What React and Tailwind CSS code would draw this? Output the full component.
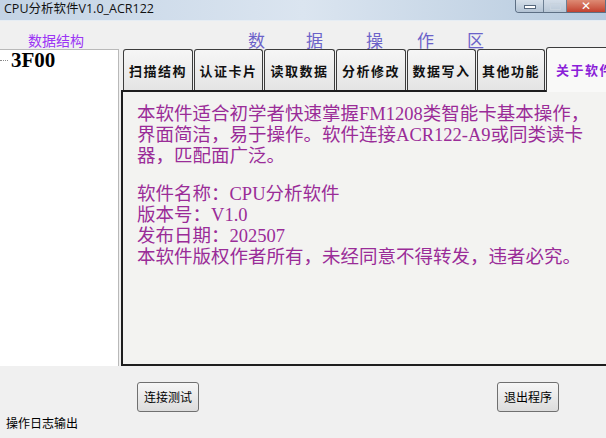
export default function App() {
  const tabs = [
    ["扫描结构", "w-[70px]"],
    ["认证卡片", "w-[69px]"],
    ["读取数据", "w-[71px]"],
    ["分析修改", "w-[70px]"],
    ["数据写入", "w-[69px]"],
    ["其他功能", "w-[68px]"],
  ];
  const lat = "font-['Liberation_Serif',serif]";
  return (
    <div className="w-[606px] h-[438px] overflow-hidden bg-[#f0f0f0] flex flex-col font-['Noto_Sans_CJK_SC',sans-serif]">
      {/* title bar */}
      <div className="h-[21px] shrink-0 flex items-start justify-between bg-linear-to-r from-[#c3d3e5] via-[#dbe5f0] to-[#b6cade] border-b border-[#e6edf4]">
        <span className="pl-[4px] pt-[1px] text-[12.5px] leading-[16px] text-[#111] font-['Open_Sans','Noto_Sans_CJK_SC',sans-serif]">
          CPU分析软件V1.0_ACR122
        </span>
        <div className="flex h-[13px] border border-t-0 border-[#5d6f84] rounded-bl-[4px] overflow-hidden">
          <div className="w-[28px] h-full flex items-center justify-center bg-linear-to-b from-[#d6e0ea] to-[#b3c3d4] border-r border-[#6d7f93]">
            <div className="w-[12px] h-[4px] bg-white border border-[#55677c] mt-[1px]" />
          </div>
          <div className="w-[23px] h-full flex items-center justify-center bg-linear-to-b from-[#d3dde8] to-[#b8c7d6] border-r border-[#6d7f93]">
            <div className="w-[11px] h-[7px] border border-[#c9d4df]" />
          </div>
          <div className="w-[38px] h-full flex items-center justify-center bg-linear-to-b from-[#dd8a74] to-[#c2402f] text-white text-[12px] leading-[12px] font-bold font-['DejaVu_Sans',sans-serif]">
            ✕
          </div>
        </div>
      </div>

      {/* header labels */}
      <div className="h-[26px] shrink-0 flex items-center">
        <span className="ml-[28px] text-[14px] leading-[16px] text-[#9b34f5] mt-[11px]">数据结构</span>
        <div className="ml-[164px] flex text-[17px] leading-[18px] text-[#6b62c9] mt-[11px]">
          <span>数</span>
          <span className="ml-[41px]">据</span>
          <span className="ml-[43px]">操</span>
          <span className="ml-[34px]">作</span>
          <span className="ml-[33px]">区</span>
        </div>
      </div>

      {/* main row */}
      <div className="h-[319px] shrink-0 flex">
        <div className="w-[119px] shrink-0 mt-[2px] bg-white border-t border-r border-[#b9b9b9]">
          <div className="flex items-center">
            <div className="w-[8px] border-t border-dotted border-[#8a8a8a]" />
            <span className={`ml-[3px] text-[21px] leading-[20px] font-bold text-black ${lat}`}>3F00</span>
          </div>
        </div>

        <div className="ml-[2px] w-[492px] shrink-0 flex flex-col">
          <div className="h-[43px] shrink-0 flex items-end pl-[2px] gap-[1px]">
            {tabs.map(([t, w]) => (
              <div
                key={t}
                className={`${w} shrink-0 h-[41px] flex items-center justify-center pt-[2px] border border-b-0 border-[#3c3c3c] rounded-t-[3px] bg-linear-to-b from-[#f6f6f6] to-[#e4e4e4] text-[13px] tracking-[1.5px] font-bold text-[#111]`}
              >
                {t}
              </div>
            ))}
            <div className="relative z-10 w-[80px] shrink-0 h-[45px] mb-[-2px] flex items-center pl-[9px] pb-[1px] border border-b-0 border-[#3c3c3c] rounded-t-[3px] bg-[#f9f9f8] text-[13px] tracking-[1.5px] font-bold text-[#8b1fd8]">
              关于软件
            </div>
          </div>
          <div className="flex-1 border-2 border-r-0 border-[#1e1e1e] bg-[#f3f3f1] pl-[14px] pt-[11px] text-[18.5px] leading-[19px] text-[#9a2c98] whitespace-nowrap">
            <div>本软件适合初学者快速掌握<span className={lat}>FM1208</span>类智能卡基本操作，</div>
            <div>界面简洁，易于操作。软件连接<span className={lat}>ACR122-A9</span>或同类读卡</div>
            <div>器，匹配面广泛。</div>
            <div className="h-[19px]" />
            <div>软件名称：<span className={lat}>CPU</span>分析软件</div>
            <div>版本号：<span className={lat}>V1.0</span></div>
            <div>发布日期：<span className={lat}>202507</span></div>
            <div>本软件版权作者所有，未经同意不得转发，违者必究。</div>
          </div>
        </div>
      </div>

      {/* bottom */}
      <div className="flex-1 flex flex-col">
        <div className="mt-[16px] flex pl-[137px]">
          <button className="w-[62px] h-[30px] rounded-[3px] border border-[#707070] bg-linear-to-b from-[#f7f7f7] to-[#dcdcdc] text-[12px] leading-[14px] text-black">
            连接测试
          </button>
          <button className="ml-[298px] w-[62px] h-[30px] rounded-[3px] border border-[#707070] bg-linear-to-b from-[#f7f7f7] to-[#dcdcdc] text-[12px] leading-[14px] text-black">
            退出程序
          </button>
        </div>
        <div className="mt-[4px] pl-[6px] text-[12px] leading-[14px] text-black">操作日志输出</div>
      </div>
    </div>
  );
}
